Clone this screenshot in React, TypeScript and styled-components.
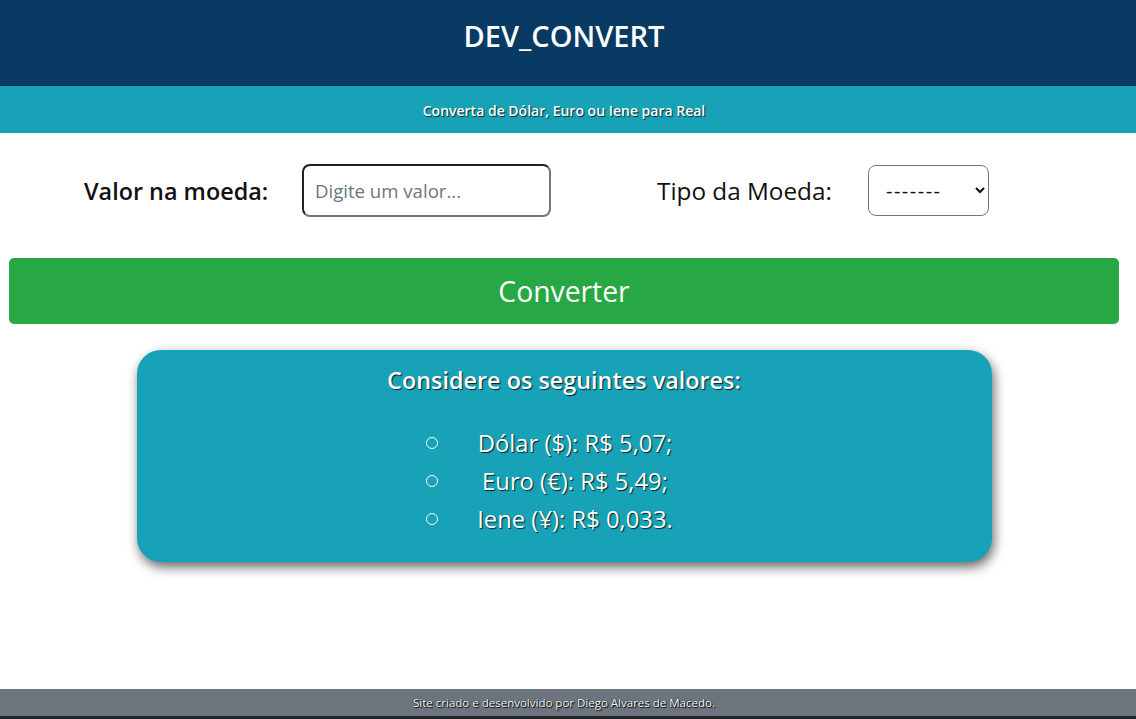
import React from "react";
import styled, { createGlobalStyle } from "styled-components";

const GlobalStyle = createGlobalStyle`
  * { box-sizing: border-box; }
  html, body { margin: 0; padding: 0; background: #ffffff; }
  body {
    font-family: "Segoe UI", "Open Sans", "Noto Sans", sans-serif;
    color: #212529;
  }
`;

const Page = styled.div`
  min-height: 719px;
  display: flex;
  flex-direction: column;
`;

const Band = styled.div`
  padding-right: 8px;
`;

const Header = styled(Band)`
  height: 86px;
  background: #083a64;
  border-bottom: 1px solid #052f55;
  display: flex;
  justify-content: center;
  align-items: flex-start;
  padding-top: 17px;
`;

const Title = styled.h1`
  margin: 0;
  color: #ffffff;
  font-size: 29px;
  line-height: 38px;
  font-weight: 600;
`;

const SubBar = styled(Band)`
  height: 47px;
  background: #17a2b8;
  display: flex;
  justify-content: center;
  align-items: center;
`;

const SubTitle = styled.p`
  margin: 1px 0 0;
  color: #ffffff;
  font-size: 14px;
  font-weight: 600;
  text-shadow: 1px 1px 1px rgba(0, 0, 0, 0.75);
`;

const Main = styled(Band)`
  flex: 1;
  display: flex;
  flex-direction: column;
`;

const FormRow = styled.div`
  display: flex;
  align-items: center;
  height: 53px;
  margin-top: 31px;
  padding-left: 84px;
`;

const FieldLabel = styled.label<{ $w: number; $bold?: boolean; $size: number }>`
  width: ${(p) => p.$w}px;
  flex: none;
  font-size: ${(p) => p.$size}px;
  font-weight: ${(p) => (p.$bold ? 600 : 400)};
  color: #111;
  white-space: nowrap;
`;

const TextInput = styled.input`
  width: 249px;
  height: 53px;
  flex: none;
  margin-right: 106px;
  border-radius: 8px;
  border-style: solid;
  border-width: 2px;
  border-color: #222 #767676 #767676 #222;
  padding: 0 11px;
  font-family: inherit;
  font-size: 18.6px;
  color: #212529;
  outline: none;
  &::placeholder {
    color: #6c757d;
  }
`;

const Select = styled.select`
  width: 121px;
  height: 51px;
  flex: none;
  border-radius: 8px;
  border: 1px solid #767676;
  background: #ffffff;
  padding: 0 8px 0 13px;
  font-family: inherit;
  font-size: 20px;
  letter-spacing: 1.5px;
  color: #111;
`;

const ConvertButton = styled.button`
  margin: 41px 9px 0;
  height: 66px;
  border: none;
  border-radius: 5px;
  background: #28a745;
  color: #ffffff;
  font-family: inherit;
  font-size: 28.3px;
  font-weight: 400;
  cursor: pointer;
`;

const Card = styled.section`
  width: 855px;
  margin: 26px auto 0;
  background: #17a2b8;
  border-radius: 24px;
  box-shadow: 2px 5px 12px rgba(0, 0, 0, 0.6);
  padding: 12px 0 24px;
  color: #ffffff;
`;

const CardTitle = styled.h2`
  margin: 0;
  text-align: center;
  font-size: 23.4px;
  line-height: 36px;
  font-weight: 600;
  text-shadow: 1px 1px 1px rgba(0, 0, 0, 0.8);
`;

const RateList = styled.ul`
  list-style: none;
  width: 277px;
  margin: 26px auto 0;
  padding: 0;
`;

const RateItem = styled.li`
  display: flex;
  align-items: center;
  height: 38px;
  font-size: 23.8px;
  text-shadow: 1px 1px 1px rgba(0, 0, 0, 0.8);
  &::before {
    content: "";
    flex: none;
    width: 10px;
    height: 10px;
    border: 1.5px solid #ffffff;
    border-radius: 50%;
    margin-right: 10px;
  }
`;

const RateText = styled.span`
  flex: 1;
  text-align: center;
`;

const Footer = styled(Band)`
  height: 27px;
  background: #6c757d;
  border-bottom: 3px solid #212529;
  display: flex;
  justify-content: center;
  align-items: center;
  box-sizing: content-box;
`;

const FooterText = styled.p`
  margin: 0;
  color: #ffffff;
  font-size: 11.5px;
  text-shadow: 1px 1px 1px #000, 0 0 1px #000;
`;

const rates = [
  "Dólar ($): R$ 5,07;",
  "Euro (€): R$ 5,49;",
  "Iene (¥): R$ 0,033.",
];

export default function App() {
  return (
    <Page>
      <GlobalStyle />
      <Header>
        <Title>DEV_CONVERT</Title>
      </Header>
      <SubBar>
        <SubTitle>Converta de Dólar, Euro ou Iene para Real</SubTitle>
      </SubBar>
      <Main>
        <FormRow>
          <FieldLabel $w={218} $size={23.4} $bold htmlFor="valor">
            Valor na moeda:
          </FieldLabel>
          <TextInput id="valor" type="text" placeholder="Digite um valor..." />
          <FieldLabel $w={211} $size={24.3} htmlFor="moeda">
            Tipo da Moeda:
          </FieldLabel>
          <Select id="moeda" defaultValue="">
            <option value="">-------</option>
            <option value="dolar">Dólar</option>
            <option value="euro">Euro</option>
            <option value="iene">Iene</option>
          </Select>
        </FormRow>
        <ConvertButton type="button">Converter</ConvertButton>
        <Card>
          <CardTitle>Considere os seguintes valores:</CardTitle>
          <RateList>
            {rates.map((r) => (
              <RateItem key={r}>
                <RateText>{r}</RateText>
              </RateItem>
            ))}
          </RateList>
        </Card>
      </Main>
      <Footer>
        <FooterText>Site criado e desenvolvido por Diego Alvares de Macedo.</FooterText>
      </Footer>
    </Page>
  );
}
